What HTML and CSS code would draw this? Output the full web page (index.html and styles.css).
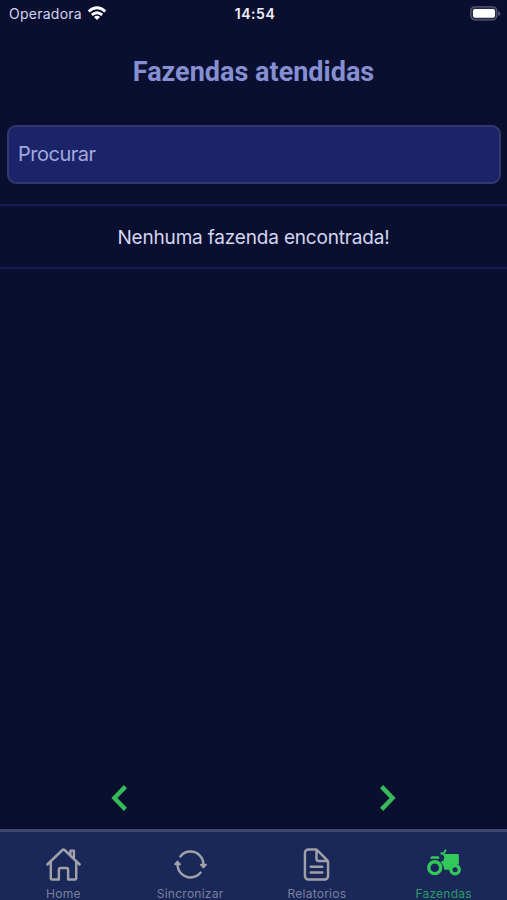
FILE: index.html
```html
<!DOCTYPE html>
<html lang="pt-BR">
<head>
<meta charset="utf-8">
<title>Fazendas atendidas</title>
<link rel="stylesheet" href="styles.css">
</head>
<body>
<div class="status">
  <div class="carrier"><span>Operadora</span>
    <svg width="20" height="15" viewBox="0 0 20 15" fill="none" stroke="#fff" stroke-width="2.8"><path d="M1.7 5.5Q10-1.9 18.3 5.5M4.8 8.9Q10 4.5 15.2 8.9"/><path d="M7 11Q10 8.6 13 11L10 14Z" fill="#fff" stroke="none"/></svg>
  </div>
  <time class="clock">14:54</time>
  <svg class="battery" width="31" height="15" viewBox="0 0 31 15"><rect x=".8" y=".8" width="26" height="13" rx="4" fill="#252746" stroke="#5b5c79" stroke-width="1.2"/><rect x="3" y="3" width="22" height="8.8" rx="2" fill="#fff"/><path d="M28.2 5v5q2.2-1 2.2-2.5T28.2 5Z" fill="#5b5c79"/></svg>
</div>
<h1 class="title">Fazendas atendidas</h1>
<input class="search" type="text" placeholder="Procurar" aria-label="Procurar">
<main class="list"><p class="empty">Nenhuma fazenda encontrada!</p></main>
<div class="pager">
  <button class="page" aria-label="Anterior"><svg width="18" height="28" viewBox="0 0 18 28"><path d="M15.4 2.6 4.4 14l11 11.4"/></svg></button>
  <button class="page" aria-label="Próxima"><svg width="18" height="28" viewBox="0 0 18 28"><path d="M2.6 2.6 13.6 14l-11 11.4"/></svg></button>
</div>
<nav class="tabs">
  <a class="tab"><svg class="icon" viewBox="0 0 512 512"><path d="M80 212v236a16 16 0 0 0 16 16h96V328a24 24 0 0 1 24-24h80a24 24 0 0 1 24 24v136h96a16 16 0 0 0 16-16V212M480 256 266.89 52c-5-5.28-16.69-5.34-21.78 0L32 256M400 179V64h-48v69"/></svg><span>Home</span></a>
  <a class="tab"><svg class="icon" viewBox="0 0 512 512"><path d="M434.67 285.59v-29.8C434.67 157.06 354.43 77 255.47 77a179 179 0 0 0-140.14 67.36M76.8 226.36v29.8C76.8 355 157 435 256 435a180.45 180.45 0 0 0 140-66.92"/><path class="solid" d="m40 254 36-40 38 40ZM472 258l-36 40-38-40Z"/></svg><span>Sincronizar</span></a>
  <a class="tab"><svg class="icon" viewBox="0 0 512 512"><path d="M416 221.25V416a48 48 0 0 1-48 48H144a48 48 0 0 1-48-48V96a48 48 0 0 1 48-48h98.75a32 32 0 0 1 22.62 9.37l141.26 141.26a32 32 0 0 1 9.37 22.62ZM256 56v120a32 32 0 0 0 32 32h120M176 288h160M176 368h160"/></svg><span>Relatorios</span></a>
  <a class="tab active"><svg class="tractor" viewBox="0 0 38 38"><path class="body" d="M20 8.3h12.8q1.5 0 1.5 1.5v9.3q-3.6-1.6-6.8.6-2.6 1.9-2.8 4.6h-5.4q-.5-5.2-4-7.9l3.3-1.6ZM6.4 10.4h7q1 .2.8 2.6H5q-.3-2 1.4-2.6Z"/><path class="pipe" d="m15.4 7.4 3 .6 2.6-4.2M18 7.6l2.8 4"/><circle class="rear" cx="9.5" cy="22.3" r="6.1"/><circle class="front" cx="30.4" cy="24.3" r="4.3"/></svg><span>Fazendas</span></a>
</nav>
</body>
</html>
```

FILE: styles.css
```css
* { box-sizing: border-box; }
body {
  margin: 0;
  height: 900px;
  overflow: hidden;
  display: flex;
  flex-direction: column;
  background: #0a0f30;
  color: #d2d6ef;
  font-family: Inter, sans-serif;
}
.status {
  height: 28px;
  flex: none;
  display: grid;
  grid-template-columns: 1fr auto 1fr;
  align-items: center;
  padding: 0 6px 0 9px;
  font-size: 14px;
}
.carrier { display: flex; align-items: center; gap: 5px; letter-spacing: .25px; }
.carrier span { margin-top: -2px; }
.carrier svg { margin-top: -2px; }
.clock { margin-top: -2px; font-size: 14px; font-weight: 600; letter-spacing: .55px; color: #f0f1fb; }
.battery { justify-self: end; margin-top: -2px; }
.title {
  margin: 27px 0 0;
  height: 34px;
  text-align: center;
  font: 700 27px/34px Roboto, sans-serif;
  color: #858fd2;
}
.search {
  flex: none;
  height: 59px;
  margin: 36px 6px 0 7px;
  padding: 0 9px 2px;
  border: 2px solid #31386e;
  border-radius: 9px;
  background: #1c2469;
  font: 20px Inter, sans-serif;
  letter-spacing: -.5px;
}
.search::placeholder { color: #a3a9df; opacity: 1; }
.list { flex: 1; margin-top: 20px; }
.empty {
  margin: 0;
  height: 65px;
  border: solid #151c52;
  border-width: 2px 0;
  text-align: center;
  font-size: 19px;
  line-height: 63px;
  letter-spacing: -.18px;
}
.pager { height: 62px; display: flex; justify-content: space-between; padding: 0 110px; }
.page { border: 0; padding: 0; background: none; display: flex; align-items: center; }
.page svg { fill: none; stroke: #35bc58; stroke-width: 4.4; }
.tabs {
  height: 71px;
  flex: none;
  display: grid;
  grid-template-columns: repeat(4, 1fr);
  border-top: 3px solid #3e4770;
  background: #1a2759;
}
.tab { display: flex; flex-direction: column; align-items: center; padding-top: 14px; color: #7a809a; font-size: 12px; line-height: 12px; letter-spacing: .25px; }
.icon { width: 37px; height: 37px; fill: none; stroke: #a0a1a8; stroke-width: 34; stroke-linecap: round; stroke-linejoin: round; }
.icon .solid { fill: #a0a1a8; stroke-width: 22; }
.tab span { white-space: nowrap; margin-top: 5px; }
.active { color: #2e9d61; }
.tractor { width: 38px; height: 37px; fill: none; stroke: #34c759; }
.body { fill: #34c759; stroke: none; }
.pipe { stroke-width: 2; }
.rear, .front { stroke-width: 3.4; }
```
